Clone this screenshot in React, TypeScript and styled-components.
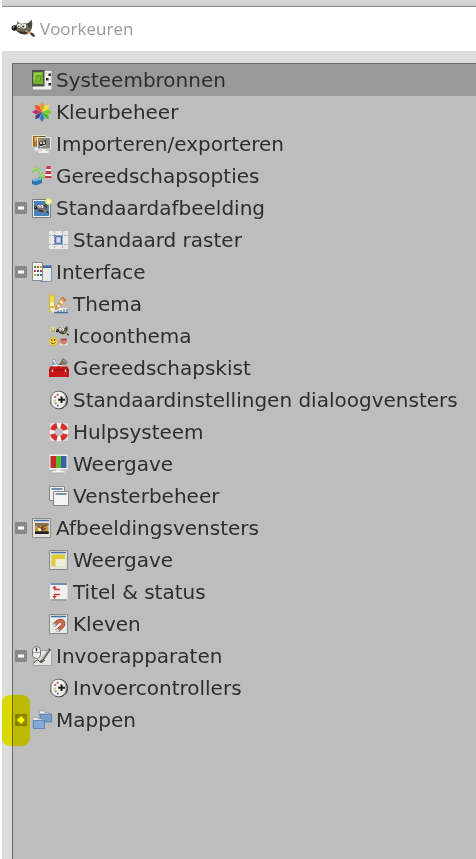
import React, { useState } from "react";
import styled, { createGlobalStyle } from "styled-components";

const GlobalStyle = createGlobalStyle`
  * { box-sizing: border-box; }
  html, body, #root { height: 100%; }
  body { margin: 0; background: #fff; overflow: hidden; }
`;

const Window = styled.main`
  display: flex;
  flex-direction: column;
  min-height: 100vh;
  margin-left: 2px;
  background: #dcdcdc;
  font-family: "DejaVu Sans", sans-serif;
  color: #2e2e2e;
`;

const TopEdge = styled.div`
  height: 7px;
  background: linear-gradient(#d9d9d9, #cecece);
  border-bottom: 1px solid #8b8b8b;
`;

const TitleBar = styled.header`
  display: flex;
  align-items: center;
  gap: 5px;
  height: 44px;
  padding: 0 9px;
  background: #fff;
`;

const Title = styled.h1`
  margin: 0;
  font: 400 17px/24px "Open Sans", "Noto Sans", sans-serif;
  color: #999;
`;

const Content = styled.div`
  display: flex;
  flex: 1;
  padding: 12px 0 0 10px;
`;

const Panel = styled.nav`
  flex: 1;
  min-width: 0;
  background: #bdbdbd;
  border: solid #6a6a6a;
  border-width: 1px 0 0 1px;
`;

const Tree = styled.ul`
  margin: 0;
  padding: 0;
  list-style: none;
`;

const Row = styled.div<{ $selected: boolean; $child: boolean }>`
  position: relative;
  display: flex;
  align-items: center;
  height: 32px;
  padding-left: ${(p) => (p.$child ? 36 : 19)}px;
  background: ${(p) => (p.$selected ? "#999" : "transparent")};
`;

const ExpanderSlot = styled.span`
  display: flex;
  width: 17px;
  margin-left: -17px;
`;

const Expander = styled.button`
  display: flex;
  align-items: center;
  justify-content: center;
  width: 12px;
  height: 12px;
  padding: 0;
  border: 0;
  border-radius: 1px;
  background: #878787;
`;

const Label = styled.button`
  display: flex;
  align-items: center;
  gap: 4px;
  flex: 1;
  min-width: 0;
  padding: 0;
  border: 0;
  background: none;
  color: inherit;
  font: 20px/32px "DejaVu Sans", sans-serif;
  text-align: left;
  white-space: nowrap;
`;

const Marker = styled.span`
  position: absolute;
  top: -9px;
  left: -11px;
  width: 28px;
  height: 51px;
  border-radius: 8px;
  background: #fffa00;
  mix-blend-mode: multiply;
  pointer-events: none;
`;

const Glyph = styled.svg`
  display: block;
  flex: none;
`;

type IconName =
  | "system" | "color" | "transfer" | "options" | "image" | "grid" | "interface"
  | "theme" | "icons" | "toolbox" | "controller" | "help" | "display" | "windows"
  | "imageWindow" | "appearance" | "status" | "snap" | "input" | "folders";

const wilber = (
  <>
    <path d="M4 6.5 Q6 6 6.5 2.5 Q8.5 3 10 5 Q13 3.5 15.5 4.5 Q18.5 3.5 20.7 .7 Q22 5 20.8 9.5 Q19.5 14 15 15.5 Q10 16 6.5 12.5 L3.5 10Z" fill="#6d695f" />
    <path d="M15.5 5 Q19 4 20.5 1 Q21.5 6 20 10 Q17 8 15.5 5Z" fill="#4a473f" />
    <path d="M5 11 Q11 14 19 11.5 Q17 15 13.5 15.3 Q8.5 15.3 5 11Z" fill="#37342f" />
    <circle cx="3.3" cy="9" r="2.7" fill="#1d1d1d" />
    <circle cx="2.7" cy="8" r=".8" fill="#dcdcdc" />
    <ellipse cx="8" cy="6.8" rx="1.9" ry="2.2" fill="#f4f2ea" />
    <circle cx="12.7" cy="7" r="2.5" fill="#f7f5ee" />
    <circle cx="7.8" cy="7.2" r=".8" fill="#222" />
    <circle cx="12.3" cy="7.4" r="1" fill="#222" />
    <path d="M14.5 12 L20.5 14.5" stroke="#d39a52" strokeWidth="1.7" />
    <path d="M20 13.5 Q23.5 14 24 18 Q21 17.5 19.5 15.5Z" fill="#34302b" />
  </>
);

const petal = "M10 10 L7.8 3.5 L10 0 L12.2 3.5Z";
const petals = ["#f29a16", "#ffe22c", "#72d216", "#4ab42f", "#3a73c9", "#40457f", "#b63063", "#f04c20"];

const drawings: Record<IconName, React.ReactNode> = {
  system: (
    <>
      <path d="M11 1H19.5V19.5H1V16H11Z" fill="#f0f0ee" />
      <path d="M0 0H12.5V16.5H0Z" fill="#4c524b" />
      <path d="M1.5 2.5H11V14H1.5Z" fill="#73b624" />
      <path d="M1.5 2.5H11L1.5 12Z" fill="#98d148" />
      <path d="M4 5.5H8.5V11H4Z" fill="#83c332" stroke="#5c9c20" />
      <path d="M6.2 6V9" stroke="#5c9c20" />
      <path d="M16.5 3.5H19V6H16.5ZM14 8H16.5V10.5H14ZM16.5 13H19V15.5H16.5Z" fill="#2b2b2b" />
      <path d="M13 3H15M13 14H15M17 9H19" stroke="#c4c6c2" />
    </>
  ),
  color: <>{petals.map((c, i) => <path key={c} d={petal} fill={c} transform={`rotate(${i * 45} 10 10)`} />)}</>,
  transfer: (
    <>
      <path d="M.5 1.5H14V13H.5Z" fill="#6b4a26" stroke="#e8e0d0" />
      <path d="M1.5 2.5H9L5 12H1.5Z" fill="#b97a2a" />
      <path d="M2 3H7L3 8Z" fill="#e5b258" />
      <path d="M3 14H9V16.5H2Z" fill="#eee" />
      <path d="M5.5 3.5H18.5V15H5.5Z" fill="#858683" stroke="#e4e4e2" />
      <path d="M6.5 5H10V10H6.5Z" fill="#b18a55" />
      <path d="M7 9Q8 6 11 8L14 6V11L11 13L8 12Z" fill="#34312c" />
      <circle cx="9" cy="9" r="1" fill="#fff" /><circle cx="12" cy="9" r="1" fill="#fff" />
      <path d="M8 13L14 11" stroke="#eee" />
      <path d="M10 15.5H14V17H16.5V19H6.5V17H10Z" fill="#f2f2f2" />
    </>
  ),
  options: (
    <>
      <path d="M0 4Q4 -1 8 3Q10 5 10.5 9L14 9L9.5 15L6 10L8 9.5Q7 5 4 5Q2 5 0 7Z" fill="#8ccb62" />
      <path d="M1 4Q5 1 8 5L9.5 10L11 10" fill="none" stroke="#b0df8c" />
      <path d="M0 14L7 11.5L10 13V17L4 19.5L0 18Z" fill="#3276b0" />
      <path d="M0 14L7 11.5L10 13L4 15.5Z" fill="#66a8d8" />
      <path d="M2 13V15M5 12V14M8 12V14" stroke="#90c6ea" strokeWidth="1.5" />
      <path d="M14.5 0H18.5L19.5 11.5H13Z" fill="#f0eeee" />
      <path d="M14.5 0H18.5L18.8 3H14.2ZM13.8 5H19L19.2 8H13.5ZM13.2 10H19.4L19.6 12H13Z" fill="#cf3340" />
    </>
  ),
  image: (
    <>
      <path d="M.5 1.5H18.5V19.5H.5Z" fill="#eeeeec" stroke="#777b79" />
      <path d="M2 3H17V18H2Z" fill="#4b82bd" />
      <g transform="translate(1.5 4) scale(.65)">{wilber}</g>
      <circle cx="16.5" cy="3.5" r="3.2" fill="#f4ea75" /><circle cx="16.5" cy="3.5" r="1.4" fill="#fffbc8" />
    </>
  ),
  grid: (
    <>
      <path d="M0 1H19V19H0Z" fill="#e8e9e6" />
      <path d="M5.5 1V19M13.5 1V19M0 5.5H19M0 14.5H19" stroke="#a9adad" strokeDasharray="2 1" />
      <path d="M6.5 6.5H12.5V13.5H6.5Z" fill="#d2deec" stroke="#4b76a8" strokeWidth="1.6" />
      <path d="M5 5H7V7H5ZM12 5H14V7H12ZM5 13H7V15H5ZM12 13H14V15H12Z" fill="#7093b8" />
    </>
  ),
  interface: (
    <>
      <path d="M8.5 3.5H19.5V19.5H8.5Z" fill="#e8eaea" stroke="#7895b5" /><path d="M10 5H19" stroke="#3969a4" strokeWidth="2" />
      <path d="M.5 .5H10.5V18.5H.5Z" fill="#f7f7f4" stroke="#888b86" />
      <path d="M2 4H4V6H2Z" fill="#478b37" /><path d="M5 4H7V6H5Z" fill="#d04d30" /><path d="M8 4H10V6H8Z" fill="#d7a62e" />
      <path d="M2 8H4V10H2Z" fill="#b93845" /><path d="M5 8H7V10H5Z" fill="#2b559b" /><path d="M8 8H10V10H8Z" fill="#b13d37" />
      <path d="M2 12H4V14H2Z" fill="#d59c24" /><path d="M5 12H7V14H5Z" fill="#3b8650" /><path d="M8 12H10V14H8Z" fill="#4267ae" />
    </>
  ),
  theme: (
    <>
      <path d="M.5 1H5.5V17Q3 20 .5 17Z" fill="#f2db48" stroke="#cfba3c" />
      <path d="M1 8H5V12H1Z" fill="#f8efa0" /><path d="M1 12H5V15H1Z" fill="#d8b83a" />
      <path d="M1 14H18L19.5 19H4Z" fill="#e9eced" />
      <path d="M5 18.5H19" stroke="#3e6d9c" strokeWidth="1.5" /><path d="M9 18V16M12 18V16M15 18V15M18 18V15" stroke="#4c789f" />
      <path d="M7 13L13 3L17 6L10 14L6 16Z" fill="#e5a45c" stroke="#bb7d3e" strokeWidth=".7" />
      <path d="M11 7L14 9.5M8.5 11L11 13" stroke="#f9eee0" strokeWidth="1.8" /><path d="M13 3.5L17 6.5" stroke="#cb783a" strokeWidth="2" />
    </>
  ),
  icons: (
    <>
      <circle cx="4" cy="3.5" r="3.2" fill="#ddd09b" /><path d="M2 3H3M5 3H6M2 5Q4 6 6 5" stroke="#91814f" fill="none" strokeWidth=".8" />
      <g transform="translate(6.5 -.5) scale(.57)">{wilber}</g>
      <circle cx="4.2" cy="15.5" r="4.2" fill="#f6d441" stroke="#d7a92b" strokeWidth=".6" />
      <circle cx="2.8" cy="14" r=".7" /><circle cx="5.6" cy="14" r=".7" /><path d="M1.8 16.5Q4.2 19 6.6 16.5" fill="none" stroke="#755816" />
      <ellipse cx="15" cy="18" rx="4.2" ry="1.5" fill="#e9dfdc" /><path d="M11.5 13H18V16Q17.5 18.5 15 18.5Q12 18.5 11.5 16Z" fill="#ce8375" />
      <ellipse cx="14.8" cy="13.5" rx="3.2" ry="1.2" fill="#a95e50" /><path d="M11 14Q9 14 11.5 17" stroke="#ce8375" fill="none" />
    </>
  ),
  toolbox: (
    <>
      <path d="M3 2L5.5 1L7 4L10 9H5Z" fill="#dce6ed" stroke="#7594ad" strokeWidth=".8" /><path d="M4 4L7 8" stroke="#4779a6" />
      <path d="M9 9L14 4" stroke="#755c49" strokeWidth="2.5" /><path d="M12 3L14 0L19 4L17 7L13 6Z" fill="#77736b" /><path d="M14 2L18 5" stroke="#b2ac9e" />
      <path d="M5 9V7.5H12V9" fill="none" stroke="#efefef" strokeWidth="1.2" />
      <path d="M1 8.5H18.5L20 11.5V19H0V11.5Z" fill="#c71717" /><path d="M0 12H20" stroke="#8d1010" />
      <path d="M3.5 11.5V14M16.5 11.5V14" stroke="#f1caca" strokeWidth="1.5" />
    </>
  ),
  controller: (
    <>
      <circle cx="10" cy="10" r="9.2" fill="#3f413e" />
      <ellipse cx="9.5" cy="10" rx="8" ry="8.5" fill="#ededeb" />
      <path d="M4 3Q0 10 4 17M15 3Q19 10 15 17" fill="none" stroke="#999c97" />
      <path d="M12.5 6.5V13M9.2 9.8H16" stroke="#1c1c1c" strokeWidth="2" />
      <circle cx="6.2" cy="7" r="1.1" fill="#d8505a" /><circle cx="8.7" cy="4.8" r="1.1" fill="#da5660" />
      <circle cx="6" cy="10.5" r="1.1" fill="#d2be52" /><circle cx="6.7" cy="13.3" r="1.1" fill="#77a363" /><circle cx="8.8" cy="15.5" r="1" fill="#526fa9" />
    </>
  ),
  help: (
    <>
      <path d="M2 6V2H6M14 2H18V6M18 14V18H14M6 18H2V14" fill="none" stroke="#e9e9e6" strokeWidth="1.5" />
      <circle cx="10" cy="10" r="6.7" fill="none" stroke="#f3f3f1" strokeWidth="5.2" />
      <g fill="none" stroke="#d7302a" strokeWidth="5.2">
        <path d="M3.6 8A6.7 6.7 0 0 1 8 3.6M12 3.6A6.7 6.7 0 0 1 16.4 8M16.4 12A6.7 6.7 0 0 1 12 16.4M8 16.4A6.7 6.7 0 0 1 3.6 12" />
      </g>
    </>
  ),
  display: (
    <>
      <path d="M.5 .5H18.5V15.5H.5Z" fill="#f0f0ed" stroke="#d8d8d5" />
      <path d="M1.5 2H7V14H1.5Z" fill="#c62b2b" /><path d="M7 2H12V14H7Z" fill="#5db92f" /><path d="M12 2H17.5V14H12Z" fill="#3462a5" />
      <path d="M7 15.5H12V17H15.5V19H3.5V17H7Z" fill="#f1f1ef" /><path d="M4 19H15" stroke="#b0b0b0" />
    </>
  ),
  windows: (
    <>
      <path d="M.5 .5H15.5V14.5H.5Z" fill="#eeefee" stroke="#858887" /><path d="M2.5 3H13.5" stroke="#4a7298" strokeWidth="1.5" />
      <path d="M4.5 5.5H19.5V19.5H4.5Z" fill="#f4f4f2" stroke="#858887" /><path d="M6.5 8H17.5" stroke="#4a7298" strokeWidth="1.5" />
    </>
  ),
  imageWindow: (
    <>
      <path d="M.5 .5H18.5V19.5H.5Z" fill="#e4e4de" stroke="#8b8d89" /><path d="M2 2.5H17" stroke="#426da5" strokeWidth="1.5" />
      <path d="M3 5H16.5V16H3Z" fill="#c89043" /><path d="M3 5H16.5V8H3Z" fill="#8a7353" /><path d="M3 13.5H16.5V16H3Z" fill="#25221f" />
      <circle cx="8" cy="11.5" r="2" fill="#fff0a5" />
      <path d="M10 15V8M10 11L6 8M10 10L14 7M10 12L14 10" stroke="#44301f" /><path d="M3 13.5H16.5V15.5H3Z" fill="#25221f" />
    </>
  ),
  appearance: (
    <>
      <path d="M.5 .5H18.5V19.5H.5Z" fill="#e4e4de" stroke="#858884" /><path d="M2 2.5H17" stroke="#426da5" strokeWidth="1.5" />
      <path d="M2.5 4.5H16V16.5H2.5Z" fill="#dfcd38" /><path d="M6.5 9H16V16.5H6.5Z" fill="#f0eedc" />
    </>
  ),
  status: (
    <>
      <path d="M1 1H18.5V19H1Z" fill="#f1f1ef" /><path d="M1.5 2H18" stroke="#496f9f" strokeWidth="1.5" /><path d="M1.5 18H18" stroke="#858884" strokeWidth="1.5" />
      <path d="M11 7.5H5.5V5M11 12.5H5.5V15" fill="none" stroke="#cf3d3f" strokeWidth="1.3" />
      <path d="M3.2 6.5L5.5 3.5L7.8 6.5ZM3.2 14H7.8L5.5 17Z" fill="#cf3d3f" />
    </>
  ),
  snap: (
    <>
      <path d="M.5 .5H18.5V19.5H.5Z" fill="#e8ece9" stroke="#858884" /><path d="M2 2.5H17" stroke="#426da5" strokeWidth="1.5" />
      <path d="M5 11L9 7.5Q12 5.5 14 8Q15.5 10.5 12.5 13L9 16" fill="none" stroke="#8d432e" strokeWidth="3.8" />
      <path d="M5 11L9 7.5Q12 5.5 14 8Q15.5 10.5 12.5 13L9 16" fill="none" stroke="#c9694a" strokeWidth="2.6" />
      <path d="M3.5 10L6 13L7.5 12L5 8.5ZM8 14L11 17L9 18L6.5 16Z" fill="#e2e2e2" stroke="#777" strokeWidth=".5" />
    </>
  ),
  input: (
    <>
      <path d="M4 4.5H19.5V19.5H1Z" fill="#e4e4e1" stroke="#a5a5a3" />
      <path d="M2 17Q5 12 7 15Q8.5 18 13 14" fill="none" stroke="#454745" />
      <path d="M.5 4.5Q.5 .5 4.5 .5Q8.5 .5 8.5 4.5V9Q8.5 12.5 4.5 12.5Q.5 12.5 .5 9Z" fill="#efefed" stroke="#777" />
      <path d="M4.5 0V6.5M1 6.5H8" stroke="#8a8a8a" strokeWidth=".8" /><path d="M4.5 2V5" stroke="#333" strokeWidth="1.5" />
      <path d="M8.5 16.5L18 3" stroke="#5b5d5a" strokeWidth="2.5" /><path d="M9.5 14L16.5 4" stroke="#c1c3bf" />
    </>
  ),
  folders: (
    <>
      <path d="M7.5 2V1H12L13 2.5H17V9H7.5Z" fill="#eef0f0" stroke="#8f9ba6" strokeWidth=".7" />
      <path d="M8 4H19.5V12H9Z" fill="#789fcb" stroke="#4d7bad" strokeWidth=".8" />
      <path d="M1 17V7.5H5L6 9H10V14L1 17Z" fill="#eef0f0" stroke="#8f9ba6" strokeWidth=".7" />
      <path d="M1.5 10.5H12.5V18.5H1.5Z" fill="#83aad5" stroke="#4d7bad" strokeWidth=".8" />
    </>
  ),
};

type Item = { id: string; label: string; icon: IconName; children?: Item[]; marked?: boolean };

const items: Item[] = [
  { id: "system", label: "Systeembronnen", icon: "system" },
  { id: "color", label: "Kleurbeheer", icon: "color" },
  { id: "transfer", label: "Importeren/exporteren", icon: "transfer" },
  { id: "options", label: "Gereedschapsopties", icon: "options" },
  { id: "image", label: "Standaardafbeelding", icon: "image", children: [{ id: "grid", label: "Standaard raster", icon: "grid" }] },
  {
    id: "interface", label: "Interface", icon: "interface", children: [
      { id: "theme", label: "Thema", icon: "theme" },
      { id: "icons", label: "Icoonthema", icon: "icons" },
      { id: "toolbox", label: "Gereedschapskist", icon: "toolbox" },
      { id: "dialogs", label: "Standaardinstellingen dialoogvensters", icon: "controller" },
      { id: "help", label: "Hulpsysteem", icon: "help" },
      { id: "display", label: "Weergave", icon: "display" },
      { id: "windows", label: "Vensterbeheer", icon: "windows" },
    ],
  },
  {
    id: "imageWindows", label: "Afbeeldingsvensters", icon: "imageWindow", children: [
      { id: "appearance", label: "Weergave", icon: "appearance" },
      { id: "status", label: "Titel & status", icon: "status" },
      { id: "snap", label: "Kleven", icon: "snap" },
    ],
  },
  { id: "input", label: "Invoerapparaten", icon: "input", children: [{ id: "controllers", label: "Invoercontrollers", icon: "controller" }] },
  { id: "folders", label: "Mappen", icon: "folders", marked: true, children: [] },
];

export default function App() {
  const [selected, setSelected] = useState("system");
  const [open, setOpen] = useState(["image", "interface", "imageWindows", "input"]);
  const toggle = (id: string) =>
    setOpen((ids) => (ids.includes(id) ? ids.filter((x) => x !== id) : [...ids, id]));

  const renderItem = (item: Item, child = false) => {
    const expanded = open.includes(item.id);
    return (
      <li key={item.id}>
        <Row $selected={selected === item.id} $child={child}>
          {item.children && (
            <ExpanderSlot>
              <Expander type="button" aria-label={item.label} aria-expanded={expanded} onClick={() => toggle(item.id)}>
                <Glyph width="12" height="12" viewBox="0 0 12 12" aria-hidden="true">
                  <path d={expanded ? "M3 6H9" : "M2.5 6H9.5M6 2.5V9.5"} stroke="#fff" strokeWidth={expanded ? 3 : 3} />
                </Glyph>
              </Expander>
            </ExpanderSlot>
          )}
          <Label type="button" aria-pressed={selected === item.id} onClick={() => setSelected(item.id)}>
            <Glyph width="20" height="20" viewBox="0 0 20 20" aria-hidden="true">{drawings[item.icon]}</Glyph>
            {item.label}
          </Label>
          {item.marked && <Marker />}
        </Row>
        {expanded && item.children && <Tree>{item.children.map((c) => renderItem(c, true))}</Tree>}
      </li>
    );
  };

  return (
    <>
      <GlobalStyle />
      <Window>
        <TopEdge />
        <TitleBar>
          <Glyph width="24" height="20" viewBox="0 0 24 20" aria-hidden="true">{wilber}</Glyph>
          <Title>Voorkeuren</Title>
        </TitleBar>
        <Content>
          <Panel aria-label="Voorkeuren">
            <Tree>{items.map((i) => renderItem(i))}</Tree>
          </Panel>
        </Content>
      </Window>
    </>
  );
}
